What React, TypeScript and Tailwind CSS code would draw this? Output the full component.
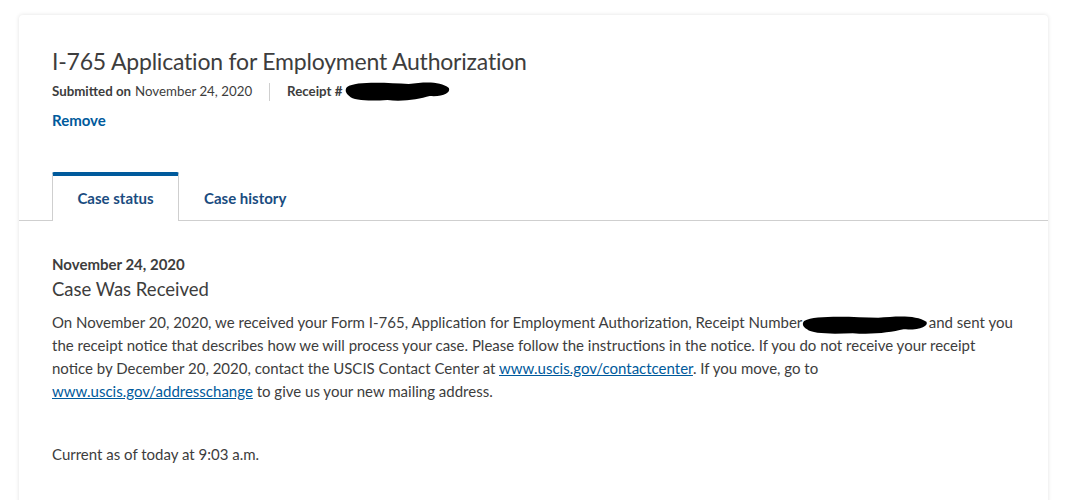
import React from "react";

function Blob({ w, h }: { w: number; h: number }) {
  return (
    <svg width={w} height={h} viewBox="0 0 100 24" preserveAspectRatio="none" className="inline-block align-middle">
      <path d="M2 8 C10 2, 40 4, 60 5 C75 3, 90 2, 98 9 C100 14, 92 18, 80 17 C70 20, 55 23, 40 21 C25 22, 8 22, 4 17 C0 14, 0 10, 2 8 Z" fill="#000" />
    </svg>
  );
}

export default function App() {
  const font = { fontFamily: "Lato, 'Noto Sans', sans-serif" };
  return (
    <div className="w-[1073px] h-[500px] bg-white overflow-hidden" style={font}>
      <div className="mt-[15px] ml-[19px] w-[1029px] h-[520px] bg-white rounded-t-[4px] shadow-[0_0_4px_rgba(0,0,0,0.12)]">
        <div className="px-[33px] pt-[31px]">
          <h1 className="text-[23px] leading-[30px] text-[#3d3d3d] tracking-[-0.2px]">I-765 Application for Employment Authorization</h1>
          <div className="flex items-center mt-[4px] text-[13.3px] text-[#3d3d3d] h-[24px]">
            <span className="font-bold">Submitted on</span>
            <span className="ml-1">November 24, 2020</span>
            <span className="mx-[17px] w-px h-[18px] bg-[#cfcfcf]"></span>
            <span className="font-bold">Receipt #</span>
            <span className="ml-[3px] -mt-[2px]"><Blob w={106} h={24} /></span>
          </div>
          <div className="mt-[5px] text-[15px] font-bold text-[#005a9c] leading-[22px]">Remove</div>
        </div>
        <div className="mt-[41px] flex px-[33px] border-b border-[#cfcfcf] h-[49px]">
          <div className="w-[127px] border-t-[4px] border-t-[#005a9c] border-x border-x-[#cfcfcf] rounded-t-[2px] bg-white -mb-px flex items-center justify-center text-[15px] font-bold text-[#1a4c80]">
            Case status
          </div>
          <div className="px-[25px] flex items-center text-[15px] font-bold text-[#1a4c80] pt-[4px]">Case history</div>
        </div>
        <div className="px-[33px] pt-[33px] text-[#3d3d3d]">
          <div className="text-[15px] font-bold leading-[20px]">November 24, 2020</div>
          <div className="text-[18.5px] leading-[26px] mt-[2px]">Case Was Received</div>
          <p className="mt-[9px] text-[15px] leading-[22.8px]">
            On November 20, 2020, we received your Form I-765, Application for Employment Authorization, Receipt Number{" "}
            <span className="inline-block w-[127px] h-[23px] align-top -ml-[4px]"><Blob w={127} h={23} /></span>and sent you
            <br />
            the receipt notice that describes how we will process your case. Please follow the instructions in the notice. If you do not receive your receipt
            <br />
            notice by December 20, 2020, contact the USCIS Contact Center at{" "}
            <a className="underline text-[#005a9c]">www.uscis.gov/contactcenter</a>. If you move, go to
            <br />
            <a className="underline text-[#005a9c]">www.uscis.gov/addresschange</a> to give us your new mailing address.
          </p>
          <div className="mt-[40px] text-[15px] leading-[24px]">Current as of today at 9:03 a.m.</div>
        </div>
      </div>
    </div>
  );
}
